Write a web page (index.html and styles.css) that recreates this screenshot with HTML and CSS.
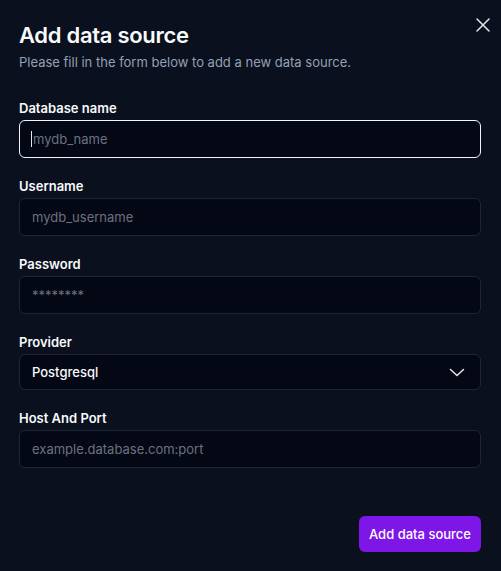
FILE: index.html
```html
<!DOCTYPE html>
<html lang="en">
<head>
<meta charset="utf-8">
<title>Add data source</title>
<link rel="stylesheet" href="styles.css">
</head>
<body>
<div class="dialog">
  <button class="close" aria-label="Close">
    <svg width="14" height="14" viewBox="0 0 14 14"><path d="M1 1L13 13M13 1L1 13" stroke="#e5e7eb" stroke-width="1.5" stroke-linecap="round"/></svg>
  </button>
  <header class="head">
    <h1 class="title">Add data source</h1>
    <p class="subtitle">Please fill in the form below to add a new data source.</p>
  </header>
  <form class="form">
    <div class="field">
      <label class="label">Database name</label>
      <div class="input focus"><span class="caret"></span><span class="ph">mydb_name</span></div>
    </div>
    <div class="field">
      <label class="label">Username</label>
      <div class="input"><span class="ph">mydb_username</span></div>
    </div>
    <div class="field">
      <label class="label">Password</label>
      <div class="input"><span class="ph stars">********</span></div>
    </div>
    <div class="field">
      <label class="label">Provider</label>
      <div class="input select"><span class="val">Postgresql</span>
        <svg class="chev" width="16" height="9" viewBox="0 0 16 9"><path d="M1.5 1.5L8 7.5L14.5 1.5" fill="none" stroke="#e5e7eb" stroke-width="1.5" stroke-linecap="round" stroke-linejoin="round"/></svg>
      </div>
    </div>
    <div class="field">
      <label class="label">Host And Port</label>
      <div class="input"><span class="ph">example.database.com:port</span></div>
    </div>
  </form>
  <footer class="foot">
    <button class="submit">Add data source</button>
  </footer>
</div>
</body>
</html>
```
FILE: styles.css
```css
* { box-sizing: border-box; }
html, body { margin: 0; height: 100%; }
body {
  background: #0a101e;
  font-family: Inter, "Noto Sans", sans-serif;
  color: #f8fafc;
}
.dialog {
  position: relative;
  padding: 19px 20px 19px 19px;
  min-height: 571px;
  display: flex;
  flex-direction: column;
}
.close {
  position: absolute;
  top: 18px;
  right: 11px;
  width: 14px;
  height: 14px;
  padding: 0;
  border: 0;
  background: none;
  display: flex;
}
.head { display: flex; flex-direction: column; gap: 1px; }
.title {
  margin: 0;
  font-size: 22px;
  line-height: 32px;
  font-weight: 600;
  letter-spacing: -0.3px;
}
.subtitle {
  margin: 0;
  font-size: 13px;
  line-height: 20px;
  color: #94a0b4;
}
.form {
  margin-top: 26px;
  display: flex;
  flex-direction: column;
  gap: 18px;
}
.field { display: flex; flex-direction: column; gap: 2px; }
.label {
  font-size: 13px;
  line-height: 20px;
  font-weight: 600;
  color: #f8fafc;
}
.input {
  height: 38px;
  border: 1px solid #1e2636;
  border-radius: 6px;
  background: #040815;
  display: flex;
  align-items: center;
  padding: 0 12px;
  font-size: 13px;
}
.input.focus { border-color: #f1f5f9; padding-left: 11px; }
.caret { width: 1px; height: 16px; background: #e5e7eb; margin-right: 1px; }
.ph { color: #6b7280; }
.select { height: 36px; justify-content: space-between; padding-right: 15px; }
.val { font-weight: 500; color: #f8fafc; }
.foot {
  margin-top: auto;
  display: flex;
  justify-content: flex-end;
}
.submit {
  height: 36px;
  padding: 0 10px;
  border: 0;
  border-radius: 6px;
  background: #7f16e8;
  color: #fff;
  font-family: inherit;
  font-size: 13px;
  font-weight: 500;
}
```
